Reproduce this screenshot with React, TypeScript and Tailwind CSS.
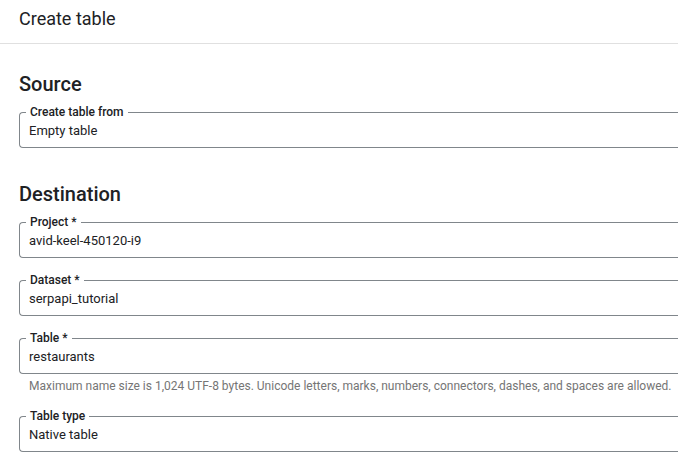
import React from 'react';

type FieldProps = {
  label: string;
  value: string;
  className?: string;
};

// Campo con contorno y etiqueta que corta la línea superior
function OutlinedField({ label, value, className = '' }: FieldProps) {
  return (
    <fieldset
      className={`border border-r-0 border-[#80868b] rounded-l-[4px] pl-[6px] pr-0 pb-[7px] m-0 min-w-0 ${className}`}
    >
      <legend className="px-[4px] text-[12px] leading-[16px] font-medium text-[#202124]">
        {label}
      </legend>
      <div className="pl-[3px] pt-[2px] text-[13px] leading-[18px] text-[#202124]">{value}</div>
    </fieldset>
  );
}

export default function App() {
  return (
    <div
      className="w-[678px] h-[460px] overflow-hidden bg-white text-[#202124]"
      style={{ fontFamily: 'Roboto, "Liberation Sans", sans-serif' }}
    >
      <header className="h-[44px] border-b border-[#e0e0e0] px-[19px] flex items-center">
        <h1 className="text-[18px] leading-[24px] font-normal -mt-[5px]">Create table</h1>
      </header>

      <div className="pl-[19px]">
        <h2 className="mt-[26px] text-[20px] leading-[28px] font-medium">Source</h2>
        <OutlinedField className="mt-[6px]" label="Create table from" value="Empty table" />

        <h2 className="mt-[32px] text-[20px] leading-[28px] font-medium">Destination</h2>
        <OutlinedField className="mt-[6px]" label="Project *" value="avid-keel-450120-i9" />
        <OutlinedField className="mt-[14px]" label="Dataset *" value="serpapi_tutorial" />
        <OutlinedField className="mt-[14px]" label="Table *" value="restaurants" />
        <p className="mt-[4px] pl-[10px] text-[12px] leading-[16px] text-[#757575] whitespace-nowrap">
          Maximum name size is 1,024 UTF-8 bytes. Unicode letters, marks, numbers, connectors, dashes, and spaces are allowed.
        </p>
        <OutlinedField className="mt-[14px]" label="Table type" value="Native table" />
      </div>
    </div>
  );
}
